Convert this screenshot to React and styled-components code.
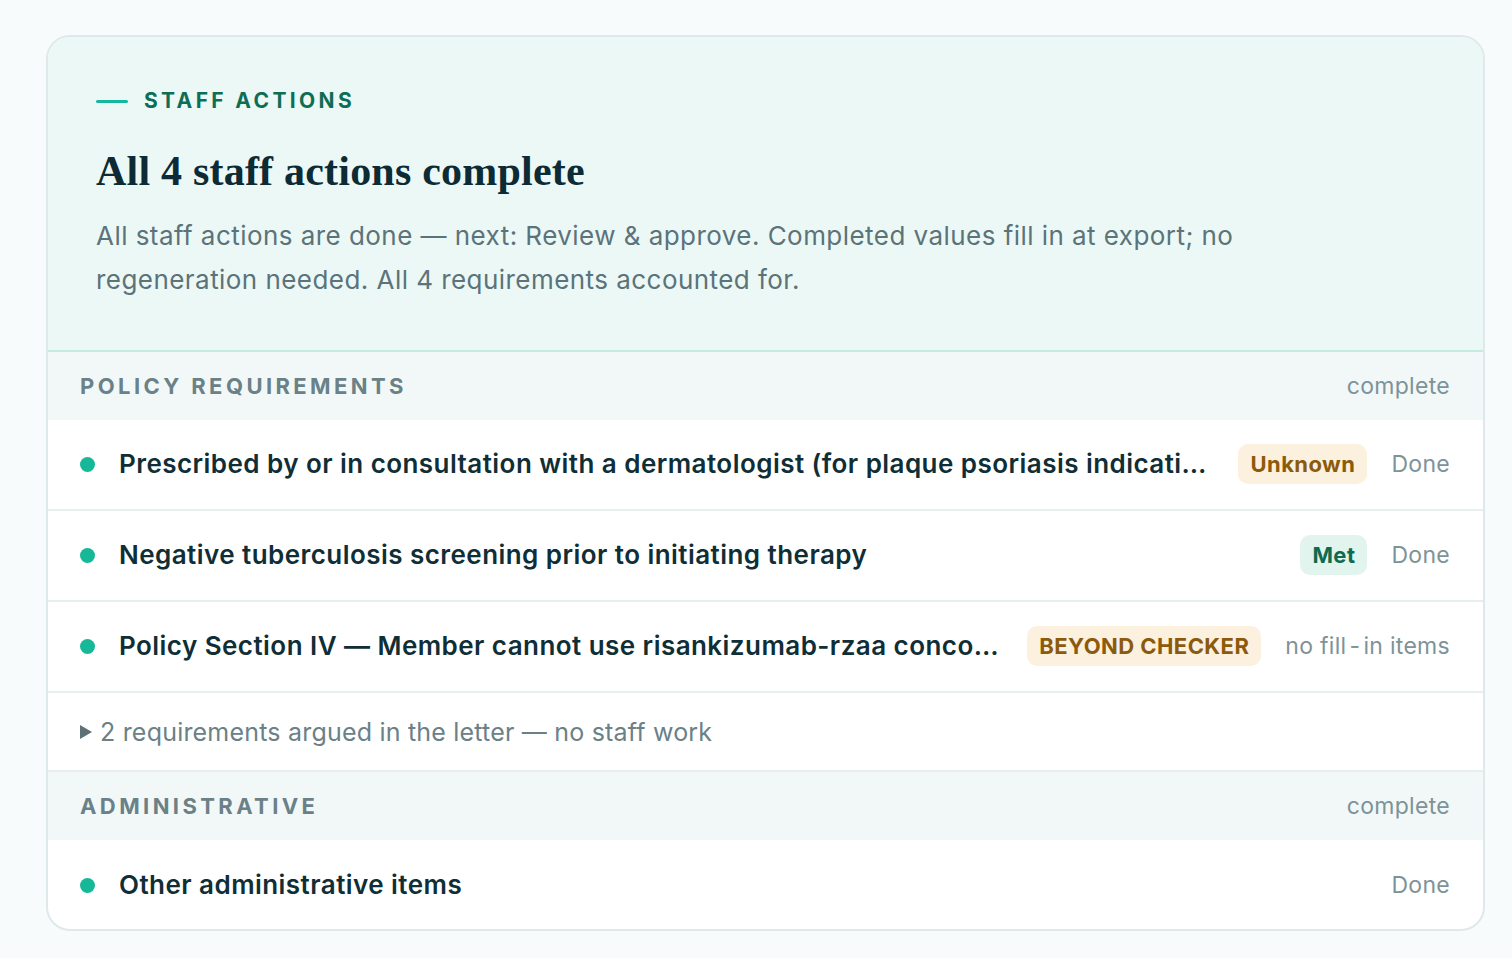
import styled, { createGlobalStyle } from "styled-components";

const GlobalStyle = createGlobalStyle`
  html, body {
    margin: 0;
    padding: 0;
    background: #f8fbfb;
    font-family: Inter, "Noto Sans", sans-serif;
  }
`;

const Page = styled.div`
  padding: 35px 27px 28px 46px;
`;

const Card = styled.section`
  border: 2px solid #dfe9e9;
  border-radius: 24px;
  background: #ffffff;
  overflow: hidden;
`;

const Header = styled.header`
  background: #ecf8f5;
  padding: 50px 48px 48px;
  border-bottom: 2px solid #c7eadf;
`;

const Eyebrow = styled.div`
  display: flex;
  align-items: center;
  gap: 16px;
  font-size: 21px;
  line-height: 28px;
  font-weight: 700;
  letter-spacing: 0.16em;
  color: #0e6e55;
  &::before {
    content: "";
    width: 32px;
    height: 3px;
    border-radius: 2px;
    background: #14b8a0;
  }
`;

const Title = styled.h1`
  margin: 32px 0 0;
  font-family: "Liberation Serif", serif;
  font-size: 42px;
  line-height: 48px;
  font-weight: 700;
  letter-spacing: 0.005em;
  color: #0d2b35;
`;

const Summary = styled.p`
  margin: 19px 0 0;
  max-width: 1180px;
  font-size: 26px;
  line-height: 44px;
  letter-spacing: 0.45px;
  color: #5b737a;
`;

const GroupHead = styled.div`
  display: flex;
  align-items: center;
  justify-content: space-between;
  padding: 21px 33px 20px 32px;
  background: #f2f8f8;
`;

const GroupLabel = styled.span`
  font-size: 22px;
  line-height: 27px;
  font-weight: 700;
  letter-spacing: 0.155em;
  color: #6a8187;
`;

const Muted = styled.span`
  font-size: 23px;
  line-height: 27px;
  letter-spacing: 0.3px;
  color: #7d9399;
  white-space: nowrap;
`;

const Hyphen = styled.span`
  margin: 0 3px;
`;

const Row = styled.div`
  display: flex;
  align-items: center;
  gap: 24px;
  padding: ${(p) => (p.$last ? "25px 33px 24px 32px" : "24px 33px 25px 32px")};
  min-height: 40px;
  border-bottom: ${(p) => (p.$last ? "none" : "2px solid #e6eeee")};
`;

const Dot = styled.span`
  flex: none;
  width: 15px;
  height: 15px;
  border-radius: 50%;
  background: #17b897;
`;

const ItemTitle = styled.span`
  flex: 1;
  min-width: 0;
  overflow: hidden;
  white-space: nowrap;
  text-overflow: ellipsis;
  font-size: 26px;
  line-height: 34px;
  font-weight: 600;
  letter-spacing: 0.45px;
  color: #0f2e36;
`;

const Badge = styled.span`
  flex: none;
  padding: 6px 12px;
  border-radius: 10px;
  font-size: 22px;
  line-height: 28px;
  font-weight: 700;
  letter-spacing: 0.02em;
  background: ${(p) => (p.$tone === "met" ? "#e1f4ee" : "#fbf1de")};
  color: ${(p) => (p.$tone === "met" ? "#0f6a4f" : "#8c5a0c")};
`;

const Collapsed = styled.div`
  display: flex;
  align-items: center;
  gap: 8px;
  padding: 23px 33px 22px 32px;
  border-bottom: 2px solid #e6eeee;
  font-size: 25px;
  line-height: 32px;
  letter-spacing: 0.2px;
  color: #6a8187;
  &::before {
    content: "";
    border-style: solid;
    border-width: 7px 0 7px 12px;
    border-color: transparent transparent transparent #5f7177;
  }
`;

const policy = [
  {
    title:
      "Prescribed by or in consultation with a dermatologist (for plaque psoriasis indication) or gastroenterologist",
    badge: "Unknown",
    tone: "amber",
    status: "Done",
  },
  {
    title: "Negative tuberculosis screening prior to initiating therapy",
    badge: "Met",
    tone: "met",
    status: "Done",
  },
  {
    title:
      "Policy Section IV — Member cannot use risankizumab-rzaa concomitantly with other biologics",
    badge: "BEYOND CHECKER",
    tone: "amber",
    status: (
      <>
        no fill<Hyphen>-</Hyphen>in items
      </>
    ),
  },
];

const Item = ({ title, badge, tone, status, last }) => (
  <Row $last={last}>
    <Dot />
    <ItemTitle>{title}</ItemTitle>
    {badge && <Badge $tone={tone}>{badge}</Badge>}
    <Muted>{status}</Muted>
  </Row>
);

export default function App() {
  return (
    <>
      <GlobalStyle />
      <Page>
        <Card>
          <Header>
            <Eyebrow>STAFF ACTIONS</Eyebrow>
            <Title>All 4 staff actions complete</Title>
            <Summary>
              All staff actions are done — next: Review &amp; approve. Completed
              values fill in at export; no regeneration needed. All 4
              requirements accounted for.
            </Summary>
          </Header>

          <GroupHead>
            <GroupLabel>POLICY REQUIREMENTS</GroupLabel>
            <Muted>complete</Muted>
          </GroupHead>
          {policy.map((p) => (
            <Item key={p.title} {...p} />
          ))}
          <Collapsed>2 requirements argued in the letter — no staff work</Collapsed>

          <GroupHead>
            <GroupLabel>ADMINISTRATIVE</GroupLabel>
            <Muted>complete</Muted>
          </GroupHead>
          <Item title="Other administrative items" status="Done" last />
        </Card>
      </Page>
    </>
  );
}
